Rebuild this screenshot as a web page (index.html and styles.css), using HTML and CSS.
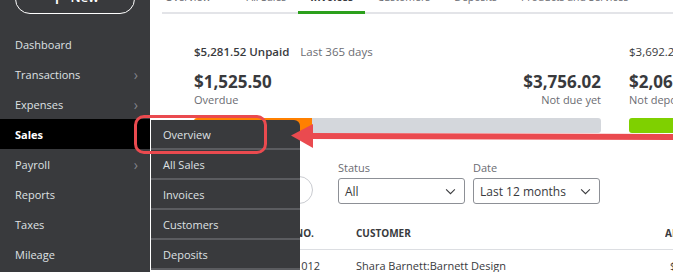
FILE: index.html
```html
<!DOCTYPE html>
<html lang="en">
<head>
    <meta charset="UTF-8">
    <meta name="viewport" content="width=device-width, initial-scale=1.0">
    <title>Sales - Invoices</title>
    <link rel="stylesheet" href="styles.css">
</head>
<body>
    <div class="app">
        <aside class="sidebar">
            <button class="new-btn"><span class="plus">+</span> New</button>
            <nav class="nav">
                <a class="nav-item">Dashboard</a>
                <a class="nav-item">Transactions <span class="chev">&#8250;</span></a>
                <a class="nav-item">Expenses <span class="chev">&#8250;</span></a>
                <a class="nav-item active">Sales</a>
                <a class="nav-item">Payroll <span class="chev">&#8250;</span></a>
                <a class="nav-item">Reports</a>
                <a class="nav-item">Taxes</a>
                <a class="nav-item">Mileage</a>
            </nav>
        </aside>

        <main class="main">
            <div class="tabs">
                <span class="tab">Overview</span>
                <span class="tab">All Sales</span>
                <span class="tab active">Invoices</span>
                <span class="tab">Customers</span>
                <span class="tab">Deposits</span>
                <span class="tab">Products and Services</span>
            </div>

            <section class="summary">
                <div class="card unpaid">
                    <div class="card-head">
                        <span class="head-strong">$5,281.52 Unpaid</span>
                        <span class="head-muted">Last 365 days</span>
                    </div>
                    <div class="amounts">
                        <div class="amt">
                            <div class="big">$1,525.50</div>
                            <div class="sub">Overdue</div>
                        </div>
                        <div class="amt amt-right">
                            <div class="big">$3,756.02</div>
                            <div class="sub">Not due yet</div>
                        </div>
                    </div>
                    <div class="bar">
                        <div class="seg seg-orange" style="width: 29%"></div>
                        <div class="seg seg-gray"></div>
                    </div>
                </div>
                <div class="card paid">
                    <div class="card-head">
                        <span class="head-plain">$3,692.25 Paid</span>
                        <span class="head-muted">Last 30 days</span>
                    </div>
                    <div class="amounts">
                        <div class="amt">
                            <div class="big">$2,062.52</div>
                            <div class="sub">Not deposited</div>
                        </div>
                    </div>
                    <div class="bar">
                        <div class="seg seg-green"></div>
                    </div>
                </div>
            </section>

            <section class="filters">
                <div class="round-btn"></div>
                <label class="field">
                    <span class="field-label">Status</span>
                    <span class="select">All
                        <svg class="caret" viewBox="0 0 12 8" width="11" height="7"><path d="M1 1.5 6 6.5 11 1.5" fill="none" stroke="#393a3d" stroke-width="1.2"/></svg>
                    </span>
                </label>
                <label class="field">
                    <span class="field-label">Date</span>
                    <span class="select">Last 12 months
                        <svg class="caret" viewBox="0 0 12 8" width="11" height="7"><path d="M1 1.5 6 6.5 11 1.5" fill="none" stroke="#393a3d" stroke-width="1.2"/></svg>
                    </span>
                </label>
            </section>

            <div class="table">
                <div class="row head">
                    <span>No.</span>
                    <span>Customer</span>
                    <span>Amount</span>
                </div>
                <div class="row">
                    <span>1012</span>
                    <span>Shara Barnett:Barnett Design</span>
                    <span class="money">$1,525.50</span>
                </div>
            </div>
        </main>
    </div>

    <!-- Sales flyout menu, shown over the page -->
    <div class="flyout">
        <a class="fly-item">Overview</a>
        <a class="fly-item">All Sales</a>
        <a class="fly-item">Invoices</a>
        <a class="fly-item">Customers</a>
        <a class="fly-item">Deposits</a>
    </div>

    <!-- annotation: red box + arrow -->
    <div class="callout"></div>
    <svg class="arrow" width="673" height="272" viewBox="0 0 673 272">
        <line x1="306" y1="136" x2="673" y2="137" stroke="#ea4a4f" stroke-width="6"/>
        <polygon points="291,135.5 313,124 313,148" fill="#ea4a4f"/>
    </svg>
</body>
</html>
```

FILE: styles.css
```css
body {
    margin: 0;
    font-family: "Open Sans", Lato, sans-serif;
    color: #393a3d;
    background: #fff;
    overflow: hidden;
    height: 272px;
}

.app {
    display: flex;
    height: 272px;
}

/* sidebar */
.sidebar {
    width: 150px;
    flex-shrink: 0;
    background-color: #393a3d;
    display: flex;
    flex-direction: column;
}

.new-btn {
    margin: -16px 0 15px 15px;
    width: 120px;
    height: 30px;
    border: 1px solid #fff;
    border-radius: 15px;
    background: transparent;
    color: #fff;
    font-family: inherit;
    font-size: 13px;
    font-weight: 600;
    display: flex;
    align-items: flex-end;
    justify-content: center;
    padding: 0 0 7px;
}

.new-btn .plus {
    font-size: 20px;
    line-height: 14px;
    margin-right: 8px;
}

.nav {
    display: flex;
    flex-direction: column;
}

.nav-item {
    height: 30px;
    display: flex;
    align-items: center;
    justify-content: space-between;
    padding: 0 12px 0 15px;
    font-size: 11px;
    color: #dfe1e4;
}

.nav-item.active {
    background-color: #000;
    color: #fff;
    font-weight: 700;
}

.chev {
    color: #80838a;
    font-size: 14px;
}

/* main */
.main {
    flex: 1;
    min-width: 0;
    overflow: hidden;
}

.tabs {
    display: flex;
    margin: -12px 0 0 12px;
    border-bottom: 2px solid #e3e4e8;
    height: 24px;
}

.tab {
    padding: 2px 12px 0;
    font-size: 10.5px;
    color: #6b6c72;
    white-space: nowrap;
    border-bottom: 3px solid transparent;
    margin-bottom: -2px;
}

.tab:first-child {
    padding: 2px 24px 0 3px;
}

.tab.active {
    color: #393a3d;
    font-weight: 700;
    border-bottom-color: #2ca01c;
}

.summary {
    display: flex;
    gap: 28px;
    padding: 30px 0 0 44px;
}

.card {
    flex-shrink: 0;
}

.unpaid {
    width: 407px;
}

.paid {
    width: 220px;
}

.card-head {
    display: flex;
    gap: 11px;
    font-size: 11.5px;
    line-height: 15px;
    white-space: nowrap;
}

.head-strong {
    font-weight: 600;
}

.head-muted {
    color: #6b6c72;
}

.amounts {
    display: flex;
    justify-content: space-between;
    margin-top: 12px;
}

.amt-right {
    text-align: right;
}

.big {
    font-size: 17px;
    line-height: 22px;
    font-weight: 700;
    white-space: nowrap;
}

.sub {
    font-size: 11px;
    line-height: 14px;
    color: #6b6c72;
    white-space: nowrap;
}

.bar {
    display: flex;
    height: 15px;
    margin-top: 11px;
    border-radius: 3px;
    overflow: hidden;
}

.seg-orange {
    background-color: #ff8000;
}

.seg-gray {
    flex: 1;
    background-color: #d4d7dc;
}

.seg-green {
    flex: 1;
    background-color: #7fd000;
}

/* filters */
.filters {
    display: flex;
    align-items: flex-end;
    gap: 8px;
    padding: 28px 0 0 135px;
}

.round-btn {
    width: 26px;
    height: 26px;
    border: 1px solid #c9cbd0;
    border-radius: 50%;
    margin-right: 17px;
}

.field {
    display: flex;
    flex-direction: column;
    gap: 3px;
}

.field-label {
    font-size: 11px;
    line-height: 14px;
    color: #6b6c72;
}

.select {
    width: 127px;
    height: 26px;
    box-sizing: border-box;
    border: 1px solid #8d9096;
    border-radius: 3px;
    display: flex;
    align-items: center;
    justify-content: space-between;
    padding: 0 8px 0 6px;
    font-size: 12px;
    color: #393a3d;
}

/* table */
.table {
    margin: 12px 0 0 145px;
}

.row {
    display: grid;
    grid-template-columns: 61px 309px 80px;
    font-size: 11px;
    white-space: nowrap;
}

.row span {
    overflow: hidden;
}

.row.head {
    height: 33px;
    align-items: center;
    border-bottom: 1px solid #dcdee2;
    font-size: 10px;
    font-weight: 700;
    text-transform: uppercase;
}

.row:not(.head) {
    padding-top: 8px;
}

.money {
    padding-left: 5px;
}

/* flyout */
.flyout {
    position: absolute;
    top: 120px;
    left: 150px;
    width: 149px;
    background-color: #393a3d;
    border-left: 1px solid #fff;
    border-top-right-radius: 6px;
}

.fly-item {
    display: flex;
    align-items: center;
    height: 28px;
    padding-left: 12px;
    border-bottom: 2px solid #5b5c60;
    font-size: 11px;
    color: #dfe1e4;
}

/* annotation */
.callout {
    position: absolute;
    left: 134px;
    top: 115px;
    width: 127px;
    height: 33px;
    border: 3px solid #ea4a4f;
    border-radius: 10px;
}

.arrow {
    position: absolute;
    left: 0;
    top: 0;
}
```
